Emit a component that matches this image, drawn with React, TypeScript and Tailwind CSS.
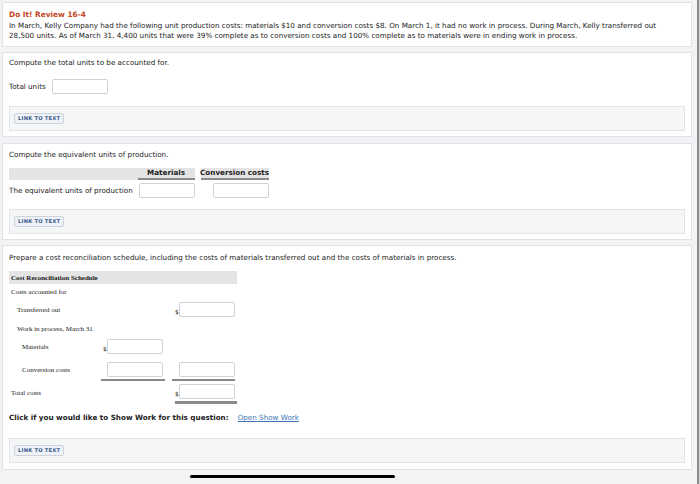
import React from "react";

const sans = { fontFamily: '"DejaVu Sans", Verdana, sans-serif' };
const serif = { fontFamily: '"Liberation Serif", "Times New Roman", serif' };

function Inp({ w = "w-[56px]" }: { w?: string }) {
  return <div className={`${w} h-[15px] shrink-0 bg-white border border-[#cfd2d6] rounded-[2px]`} />;
}

function Dollar() {
  return <div className="w-[4px] text-[6px] leading-[8px] self-end pb-[1px]" style={sans}>$</div>;
}

function LinkBox() {
  return (
    <div className="mx-[6px] h-[25px] bg-[#f5f6f8] border border-[#e1e3e7] flex items-center pl-[4px]">
      <div className="h-[11px] px-[3px] flex items-center bg-[#eef1f6] border border-[#cdd3dc] rounded-[2px] text-[5.2px] font-bold text-[#3b5b8e] tracking-[0.2px]" style={sans}>
        LINK TO TEXT
      </div>
    </div>
  );
}

export default function App() {
  return (
    <div className="w-[700px] h-[484px] bg-[#f2f3f5] flex overflow-hidden relative" style={sans}>
      <div className="w-[696px] flex flex-col pl-[2px] pt-[2px]">
        {/* Card 1 */}
        <div className="w-[690px] h-[45px] shrink-0 bg-white border border-[#e0e2e6] px-[6px] pt-[7px] text-[7.2px] leading-[10px] text-[#222]">
          <div className="font-bold text-[#c4451c] text-[7.4px]">Do It! Review 16-4</div>
          <div className="mt-[1px] w-[648px]">
            In March, Kelly Company had the following unit production costs: materials $10 and conversion costs $8. On March 1, it had no work in process. During March, Kelly transferred out 28,500 units. As of March 31, 4,400 units that were 39% complete as to conversion costs and 100% complete as to materials were in ending work in process.
          </div>
        </div>

        {/* Card 2 */}
        <div className="mt-[5px] w-[690px] h-[85px] shrink-0 bg-white border border-[#e0e2e6] flex flex-col text-[7.2px] text-[#222]">
          <div className="px-[6px] mt-[5px] h-[10px] leading-[10px]">Compute the total units to be accounted for.</div>
          <div className="px-[6px] mt-[11px] h-[15px] flex items-center gap-[6px] leading-[10px]">
            <span>Total units</span>
            <Inp />
          </div>
          <div className="mt-[12px]"><LinkBox /></div>
        </div>

        {/* Card 3 */}
        <div className="mt-[6px] w-[690px] h-[97px] shrink-0 bg-white border border-[#e0e2e6] flex flex-col text-[7.2px] text-[#222]">
          <div className="px-[6px] mt-[6px] h-[10px] leading-[10px]">Compute the equivalent units of production.</div>
          <div className="ml-[6px] mt-[8px] w-[260px]">
            <div className="flex h-[12px] bg-[#e4e4e4] items-end leading-[10px]">
              <div className="w-[129px]" />
              <div className="w-[57px] h-full flex items-center justify-end pr-[10px] font-bold border-b-2 border-[#8a8a8a]">Materials</div>
              <div className="w-[6px] h-full bg-white" />
              <div className="w-[68px] h-full flex items-center justify-end font-bold border-b-2 border-[#8a8a8a] whitespace-nowrap">Conversion costs</div>
            </div>
            <div className="flex items-center mt-[3px] h-[15px]">
              <div className="w-[130px] leading-[10px] whitespace-nowrap">The equivalent units of production</div>
              <Inp />
              <div className="w-[18px]" />
              <Inp />
            </div>
          </div>
          <div className="mt-[11px]"><LinkBox /></div>
        </div>

        {/* Card 4 */}
        <div className="mt-[5px] w-[690px] h-[225px] shrink-0 bg-white border border-[#e0e2e6] flex flex-col text-[7.2px] text-[#222]">
          <div className="px-[6px] mt-[7px] h-[10px] leading-[10px]">Prepare a cost reconciliation schedule, including the costs of materials transferred out and the costs of materials in process.</div>
          <div className="ml-[6px] mt-[8px] w-[228px] text-[7px] leading-[10px] text-[#1a1a1a]" style={serif}>
            <div className="h-[13px] bg-[#e4e4e4] flex items-center pl-[2px] font-bold">Cost Reconciliation Schedule</div>
            <div className="h-[10px] mt-[3px] flex items-center pl-[2px]">Costs accounted for</div>
            <div className="flex items-center mt-[5px] h-[15px]">
              <div className="w-[166px] pl-[8px]">Transferred out</div>
              <Dollar />
              <Inp />
            </div>
            <div className="h-[10px] mt-[7px] flex items-center pl-[8px]">Work in process, March 31</div>
            <div className="flex items-center mt-[5px] h-[15px]">
              <div className="w-[94px] pl-[13px]">Materials</div>
              <Dollar />
              <Inp />
            </div>
            <div className="flex items-start mt-[8px] h-[19px]">
              <div className="w-[92px] pl-[13px] pt-[3px]">Conversion costs</div>
              <div className="w-[64px] flex flex-col items-end border-b-2 border-[#8a8a8a] pb-[2px]">
                <div className="mr-[2px]"><Inp /></div>
              </div>
              <div className="w-[7px]" />
              <div className="w-[63px] flex flex-col items-end border-b-2 border-[#8a8a8a] pb-[2px]">
                <Inp />
              </div>
            </div>
            <div className="flex items-start mt-[3px]">
              <div className="w-[166px] pl-[2px] pt-[4px]">Total costs</div>
              <div className="w-[62px] flex flex-col">
                <div className="flex h-[15px]">
                  <Dollar />
                  <Inp />
                </div>
                <div className="mt-[2px] h-[3px] bg-[#8a8a8a]" />
              </div>
            </div>
          </div>
          <div className="px-[6px] mt-[9px] h-[10px] leading-[10px] flex whitespace-nowrap">
            <span className="font-bold">Click if you would like to Show Work for this question:</span>
            <span className="ml-[9px] text-[#3a76b8] underline">Open Show Work</span>
          </div>
          <div className="mt-[15px]"><LinkBox /></div>
        </div>
      </div>
      {/* scrollbar edge */}
      <div className="w-[4px] flex">
        <div className="w-[1px]" />
        <div className="w-[2px] bg-[#8c8c8c]" />
        <div className="w-[1px] bg-[#d4d4d4]" />
      </div>
      {/* home indicator */}
      <div className="absolute left-[190px] top-[475px] w-[205px] h-[3px] rounded-full bg-black" />
    </div>
  );
}
